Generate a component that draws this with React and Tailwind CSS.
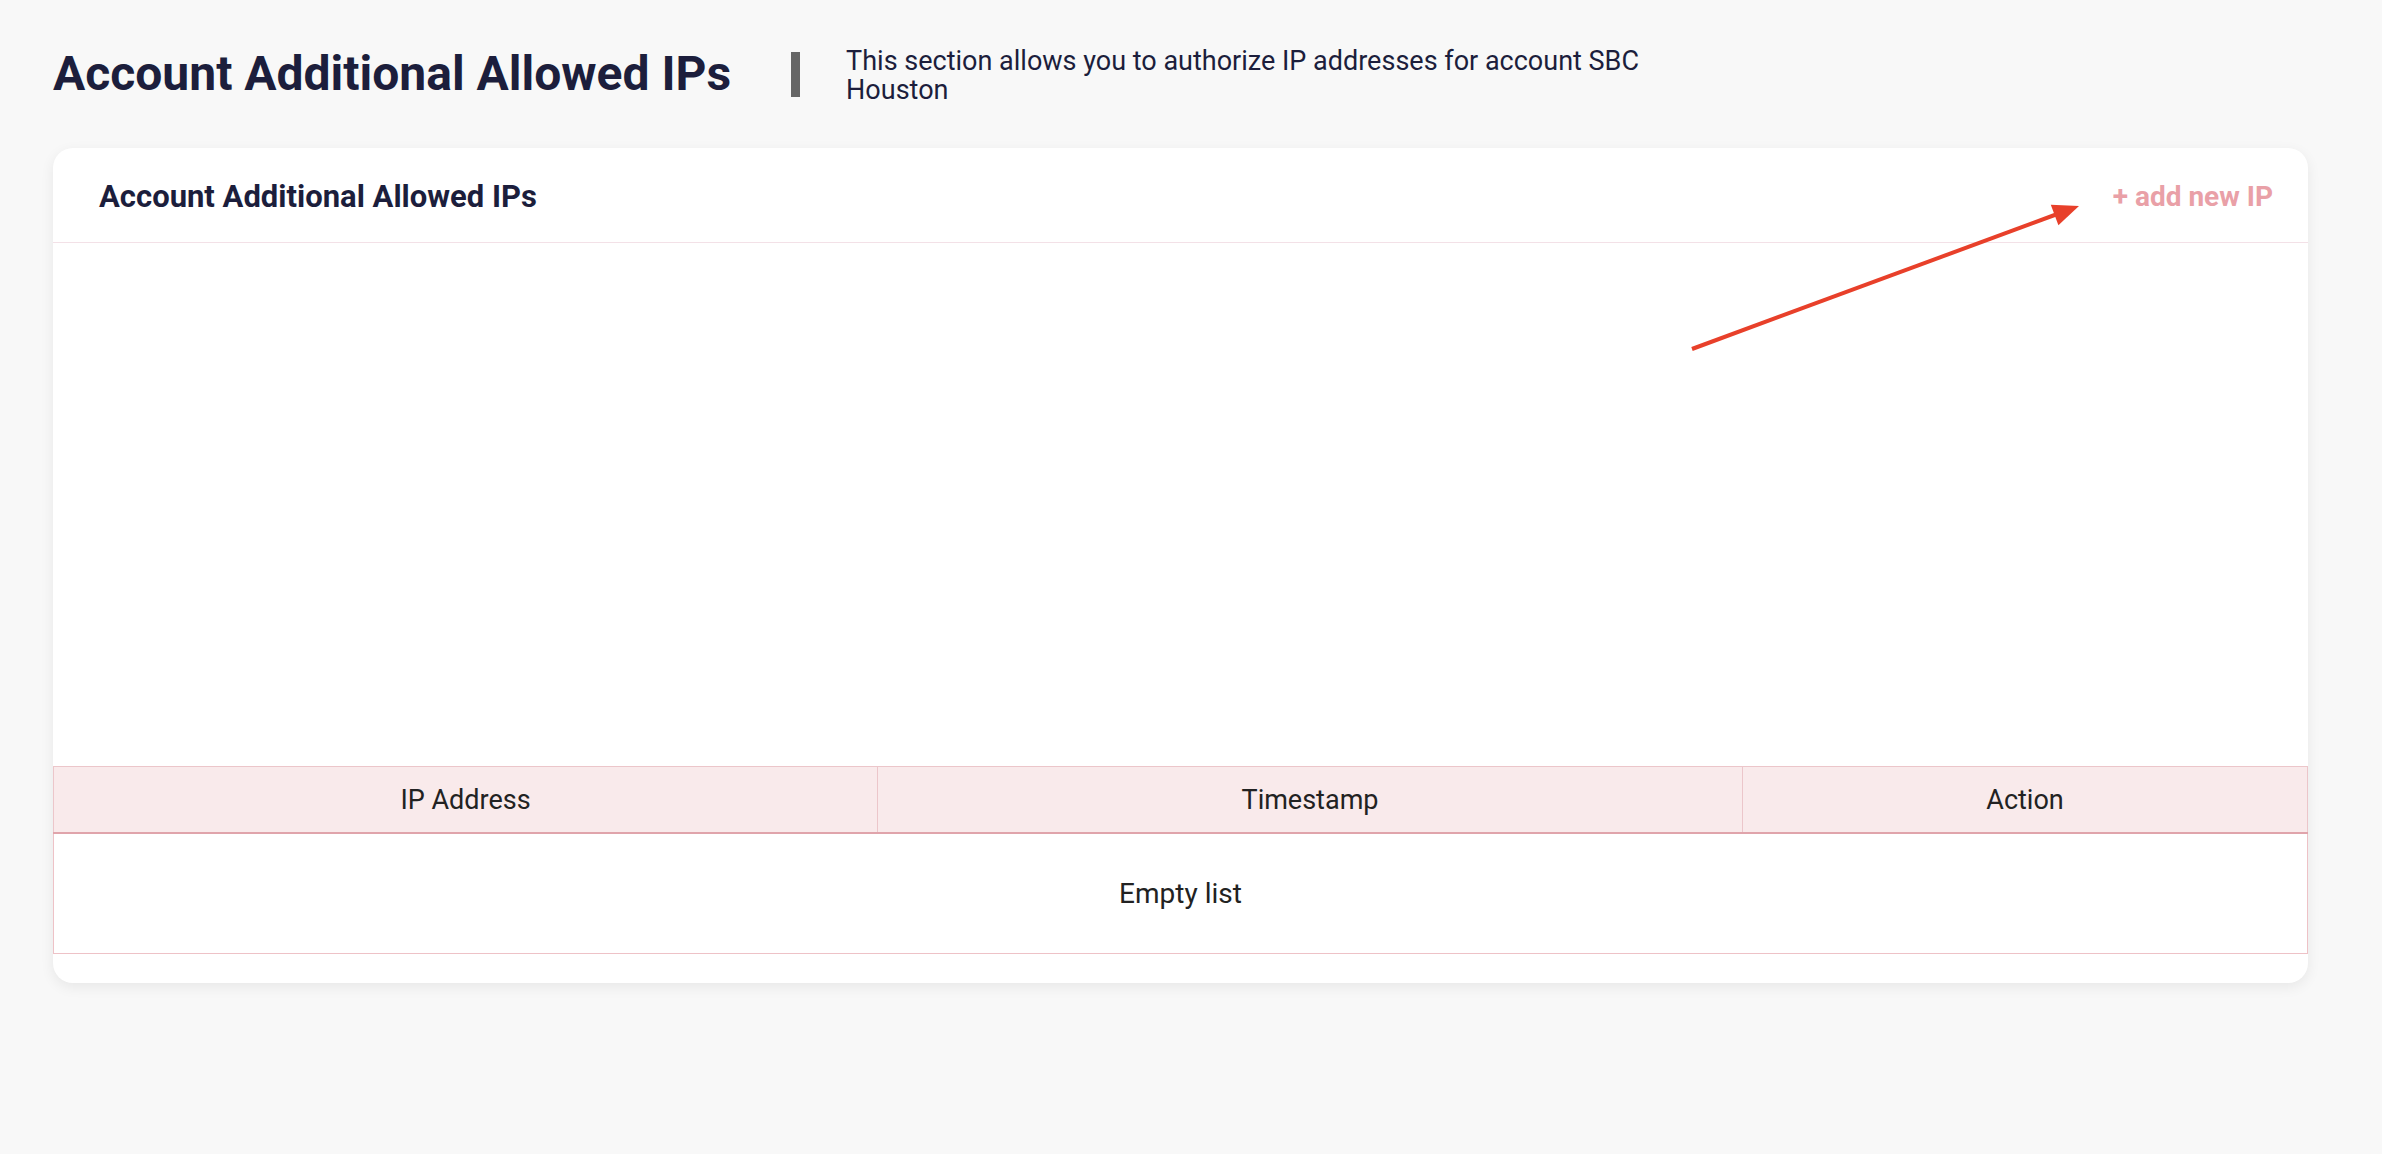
export default function App() {
  return (
    <div className="min-h-[1154px] w-full bg-[#f8f8f8] font-['Roboto',sans-serif] text-[#1c1e3c]">
      <div className="pl-[53px] pr-[74px] pt-[45px]">
        <div className="flex h-[58px] items-center">
          <h1 className="text-[48px] font-bold leading-none">Account Additional Allowed IPs</h1>
          <div className="ml-[60px] h-[45px] w-[9px] bg-[#666666]" />
          <p className="ml-[46px] mt-[4px] w-[850px] text-[27px] leading-[29px]">
            This section allows you to authorize IP addresses for account SBC Houston
          </p>
        </div>

        <div className="relative mt-[45px] overflow-hidden rounded-[20px] bg-white shadow-[0_4px_14px_rgba(0,0,0,0.07)]">
          <div className="flex h-[95px] items-center justify-between border-b border-[#f3e1e7] pl-[46px] pr-[35px] pt-[3px]">
            <h2 className="text-[31px] font-bold leading-none">Account Additional Allowed IPs</h2>
            <button className="text-[28px] font-bold leading-none text-[#e9a0a7]">+ add new IP</button>
          </div>

          <div className="h-[523px]" />

          <table className="w-full table-fixed border-collapse text-[27px] text-[#222222]">
            <colgroup>
              <col className="w-[824px]" />
              <col className="w-[865px]" />
              <col />
            </colgroup>
            <thead>
              <tr className="h-[66px] bg-[#f9eaeb]">
                <th className="border border-b-2 border-[#ecc6ca] border-b-[#e0a4ab] pt-[2px] font-normal">IP Address</th>
                <th className="border border-b-2 border-[#ecc6ca] border-b-[#e0a4ab] pt-[2px] font-normal">Timestamp</th>
                <th className="border border-b-2 border-[#ecc6ca] border-b-[#e0a4ab] pt-[2px] font-normal">Action</th>
              </tr>
            </thead>
            <tbody>
              <tr className="h-[121px]">
                <td colSpan={3} className="border border-[#eec2c7] pt-[2px] text-center text-[28px]">Empty list</td>
              </tr>
            </tbody>
          </table>

          <div className="h-[29px]" />

          <svg
            className="pointer-events-none absolute left-0 top-0"
            width="2255"
            height="300"
            xmlns="http://www.w3.org/2000/svg"
          >
            <line x1="1639" y1="201" x2="2003" y2="66.5" stroke="#e8402a" strokeWidth="4" />
            <polygon points="2026,58 2005.4,77.3 1997.8,56.7" fill="#e8402a" />
          </svg>
        </div>
      </div>
    </div>
  );
}
